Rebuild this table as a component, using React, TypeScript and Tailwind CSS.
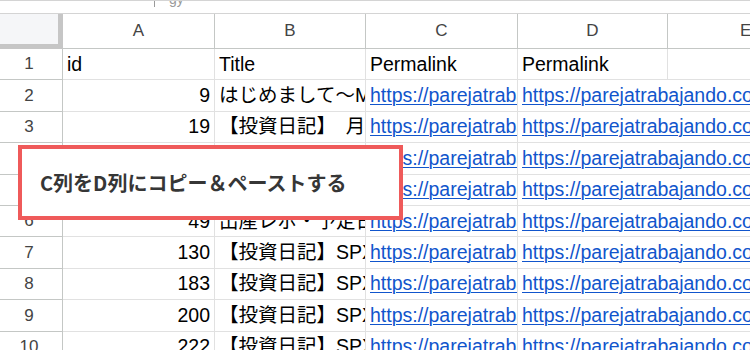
import React from "react";

type Row = {
  n: number;
  id: string;
  title: string;
};

const rows: Row[] = [
  { n: 2, id: "9", title: "はじめまして〜Mamá trabajando" },
  { n: 3, id: "19", title: "【投資日記】　月次報告" },
  { n: 4, id: "27", title: "【投資日記】　月次報告" },
  { n: 5, id: "38", title: "【投資日記】　月次報告" },
  { n: 6, id: "49", title: "出産レポ・予定日より早く" },
  { n: 7, id: "130", title: "【投資日記】SPXL" },
  { n: 8, id: "183", title: "【投資日記】SPXL" },
  { n: 9, id: "200", title: "【投資日記】SPXL" },
  { n: 10, id: "222", title: "【投資日記】SPXL" },
];

const URL = "https://parejatrabajando.com/";

function HeaderCell({ label, w }: { label: string; w: string }) {
  return (
    <div
      className={`${w} shrink-0 h-full flex items-center justify-center border-r border-b border-[#c4c7c5] bg-white text-[17px] text-[#444]`}
    >
      {label}
    </div>
  );
}

function RowNum({ n }: { n: number }) {
  return (
    <div className="w-[63px] shrink-0 h-full flex items-center justify-center border-r border-b border-[#c4c7c5] bg-white text-[17px] text-[#444] pr-[4px]">
      {n}
    </div>
  );
}

function Link({ text }: { text: string }) {
  return (
    <span className="text-[#1155cc] underline decoration-1 underline-offset-[2px]">
      {text}
    </span>
  );
}

export default function App() {
  return (
    <div className="relative w-[750px] h-[350px] overflow-hidden bg-white font-[family-name:'Liberation_Sans','Noto_Sans_CJK_JP',sans-serif]">
      {/* formula bar remnant */}
      <div className="h-[14px] border-t border-b border-[#d4d4d4] flex items-start overflow-hidden">
        <div className="ml-[154px] w-px h-[6px] bg-[#9a9a9a]" />
        <div className="ml-[14px] -mt-[9px] text-[14px] text-[#9a9a9a] leading-none">gy</div>
      </div>

      {/* column headers */}
      <div className="flex h-[35px]">
        <div className="w-[63px] shrink-0 h-full bg-[#f5f6f8] border-r-[5px] border-b-[5px] border-[#c6c6c6]" />
        <HeaderCell label="A" w="w-[152px]" />
        <HeaderCell label="B" w="w-[151px]" />
        <HeaderCell label="C" w="w-[152px]" />
        <HeaderCell label="D" w="w-[150px]" />
        <div className="w-[150px] shrink-0 h-full flex items-center border-b border-[#c4c7c5] text-[17px] text-[#444] pl-[72px]">
          E
        </div>
      </div>

      {/* row 1: field names */}
      <div className="flex h-[31.4px]">
        <RowNum n={1} />
        <div className="w-[152px] shrink-0 h-full flex items-center px-[4px] border-r border-b border-[#e1e1e1] text-[19.5px] text-black">
          id
        </div>
        <div className="w-[151px] shrink-0 h-full flex items-center px-[4px] border-r border-b border-[#e1e1e1] text-[19.5px] text-black">
          Title
        </div>
        <div className="w-[152px] shrink-0 h-full flex items-center px-[4px] border-r border-b border-[#e1e1e1] text-[19.5px] text-black">
          Permalink
        </div>
        <div className="w-[150px] shrink-0 h-full flex items-center px-[4px] border-r border-b border-[#e1e1e1] text-[19.5px] text-black">
          Permalink
        </div>
        <div className="w-[150px] shrink-0 h-full border-b border-[#e1e1e1]" />
      </div>

      {/* data rows */}
      {rows.map((r) => (
        <div key={r.n} className="flex h-[31.4px]">
          <RowNum n={r.n} />
          <div className="w-[152px] shrink-0 h-full flex items-center justify-end px-[4px] border-r border-b border-[#e1e1e1] text-[19.5px] text-black">
            {r.id}
          </div>
          <div className="w-[151px] shrink-0 h-full flex items-center px-[4px] border-r border-b border-[#e1e1e1] text-[19.5px] text-black whitespace-nowrap overflow-hidden">
            {r.title}
          </div>
          <div className="w-[152px] shrink-0 h-full flex items-center px-[4px] border-r border-b border-[#e1e1e1] text-[19.5px] whitespace-nowrap overflow-hidden">
            <Link text={URL} />
          </div>
          <div className="w-[300px] shrink-0 h-full flex items-center px-[4px] border-b border-[#e1e1e1] text-[19.5px] whitespace-nowrap overflow-hidden">
            <Link text={URL} />
          </div>
        </div>
      ))}

      {/* callout */}
      <div className="absolute left-[18px] top-[145px] w-[385px] h-[75px] bg-white border-[4px] border-[#ef5a5a] flex items-center pl-[18px]">
        <span className="text-[20px] font-bold text-[#363636] font-[family-name:'Noto_Sans_CJK_JP','Noto_Sans',sans-serif]">
          C列をD列にコピー＆ペーストする
        </span>
      </div>
    </div>
  );
}
